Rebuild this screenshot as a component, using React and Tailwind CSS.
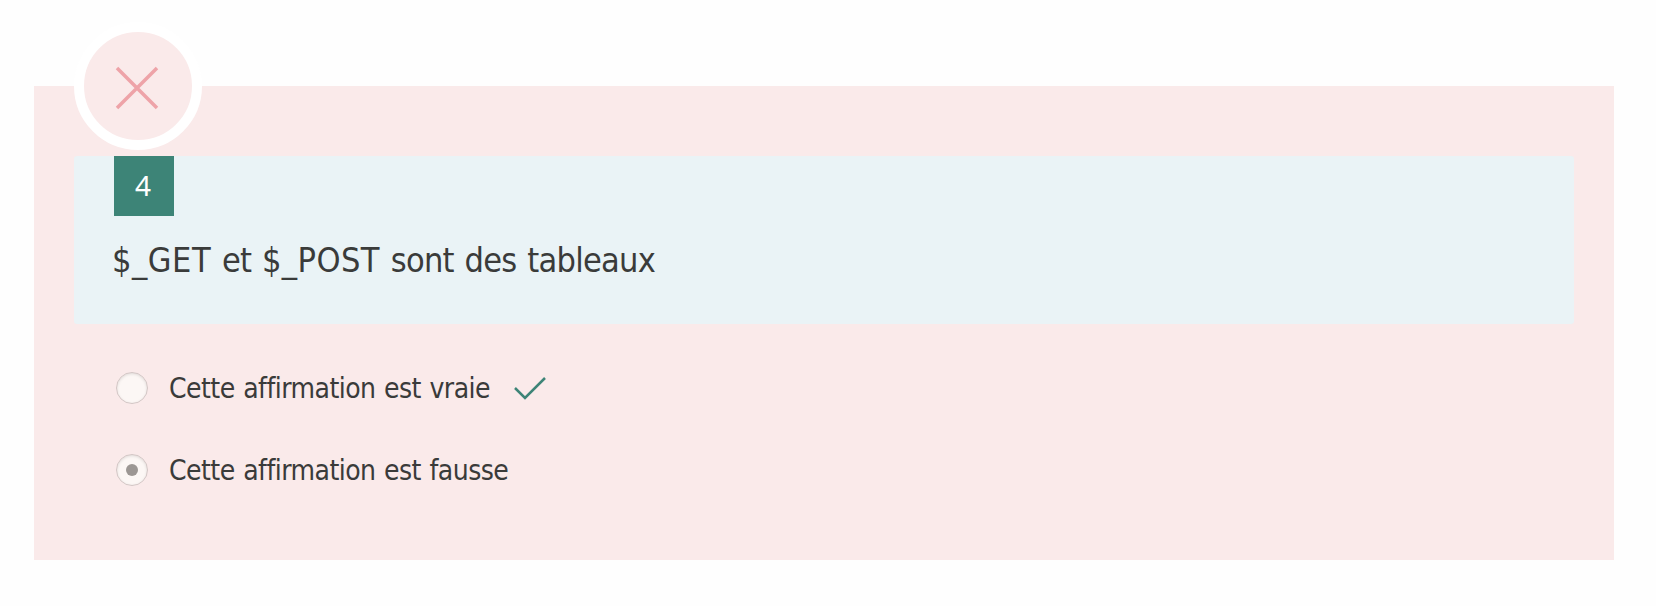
const answers = [
  { label: "Cette affirmation est vraie", correct: true, selected: false },
  { label: "Cette affirmation est fausse", correct: false, selected: true },
];

function Answer({ label, correct, selected }) {
  return (
    <li className="flex h-[38px] items-center">
      <span className="flex size-8 shrink-0 items-center justify-center rounded-full border border-[#d3c6c5] bg-[#fcf7f5] shadow-[inset_0_1px_3px_rgba(0,0,0,0.12)]">
        {selected && <span className="size-[11.4px] rounded-full bg-[#9c9794]" />}
      </span>
      <span className="ml-[21px] whitespace-nowrap pt-[2px] text-[28px] leading-[38px] tracking-[-0.54px] [word-spacing:1.1px]">{label}</span>
      {correct && (
        <svg className="ml-[23.5px] h-[24px] w-[34px] shrink-0" viewBox="0 0 34 24" fill="none" stroke="#3d8477" strokeWidth="2.5">
          <path d="M1 12L11 22L31 2" />
        </svg>
      )}
    </li>
  );
}

export default function App() {
  return (
    <main className="h-[606px] w-[1656px] bg-[#fefefe] px-[34px] pt-[86px] pr-[42px] font-['DejaVu_Sans_Condensed','DejaVu_Sans',sans-serif] [font-stretch:condensed] text-[#3a3b3a]">
      <section className="relative h-[474px] bg-[#faeaea] px-10 pt-[70px]">
        <div className="absolute -top-16 left-10 flex size-32 items-center justify-center rounded-full border-10 border-white bg-[#faeaea]">
          <svg className="size-full" viewBox="0 0 108 108" fill="none" stroke="#eea3a8" strokeWidth="3.5">
            <path d="M33 36L73 76M73 36L33 76" />
          </svg>
        </div>
        <header className="h-[168px] rounded-[3px] bg-[#eaf3f6] pr-10 pl-[38px]">
          <div className="ml-[2px] flex size-[60px] items-center justify-center bg-[#3d8477] pr-[2px] pb-[2px] font-['Noto_Sans',sans-serif] text-[28px] text-white">4</div>
          <h1 className="mt-[22px] whitespace-nowrap text-[34px] leading-[44px] tracking-[-0.73px] [word-spacing:1.7px]">
            <span className="tracking-[0.55px]">$_GET</span> et <span className="tracking-[0.45px]">$_POST</span> sont des tableaux
          </h1>
        </header>
        <ul className="mt-[45px] ml-[42px] flex flex-col gap-11">
          {answers.map((a) => (
            <Answer key={a.label} {...a} />
          ))}
        </ul>
      </section>
    </main>
  );
}
